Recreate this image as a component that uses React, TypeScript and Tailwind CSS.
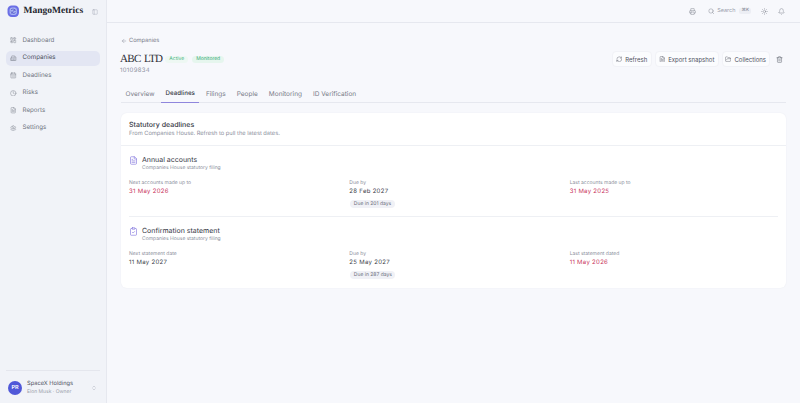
import React from 'react'
import {
  ArrowLeft,
  Bell,
  Building2,
  CalendarDays,
  ChevronsUpDown,
  ClipboardCheck,
  Clock,
  FileText,
  FolderOpen,
  LayoutDashboard,
  PanelLeft,
  Printer,
  RefreshCw,
  Search,
  Settings,
  Sun,
  Trash2,
} from 'lucide-react'

const navItems = [
  { label: 'Dashboard', icon: LayoutDashboard },
  { label: 'Companies', icon: Building2, active: true },
  { label: 'Deadlines', icon: CalendarDays },
  { label: 'Risks', icon: Clock },
  { label: 'Reports', icon: FileText },
  { label: 'Settings', icon: Settings },
]

const tabs = ['Overview', 'Deadlines', 'Filings', 'People', 'Monitoring', 'ID Verification']

function Field({ label, value, danger, badge }: { label: string; value: string; danger?: boolean; badge?: string }) {
  return (
    <div>
      <div className="text-[5px] leading-[8px] text-[#8b8f9c]">{label}</div>
      <div className={`text-[6px] leading-[10px] tracking-[0.3px] ${danger ? 'text-[#c8325a]' : 'text-[#3a3d48]'}`}>{value}</div>
      {badge && (
        <div className="mt-[3px] ml-[1px] w-fit rounded-[4px] bg-[#f0f1f6] px-[3.5px] text-[5px] leading-[8px] text-[#6b6f7c]">{badge}</div>
      )}
    </div>
  )
}

function Section({
  icon: Icon,
  title,
  fields,
}: {
  icon: React.ElementType
  title: string
  fields: { label: string; value: string; danger?: boolean; badge?: string }[]
}) {
  return (
    <div>
      <div className="flex items-start gap-[4px]">
        <Icon className="mt-[1px] h-[9px] w-[9px] text-[#7c6fdc]" strokeWidth={1.6} />
        <div>
          <div className="text-[7px] leading-[9px] text-[#33363f]">{title}</div>
          <div className="mt-[1px] text-[5px] leading-[7px] text-[#8b8f9c]">Companies House statutory filing</div>
        </div>
      </div>
      <div className="mt-[7px] grid grid-cols-3 gap-3">
        {fields.map((f) => (
          <Field key={f.label} {...f} />
        ))}
      </div>
    </div>
  )
}

export default function App() {
  return (
    <div className="flex h-[403px] w-[800px] overflow-hidden bg-[#f7f8fc] font-['Inter',sans-serif] [text-rendering:geometricPrecision]">
      {/* Sidebar */}
      <aside className="flex w-[107px] shrink-0 flex-col border-r border-[#e6e8ef] bg-[#f1f3f8] px-[6px]">
        <div className="flex h-[23px] items-center pl-[1px]">
          <svg viewBox="0 0 24 24" className="h-[12.5px] w-[12.5px]">
            <rect x="1" y="1" width="22" height="22" rx="8" fill="#6a6ee6" />
            <rect x="5" y="5" width="14" height="14" rx="5" fill="#a9b4f2" />
            <path d="M8 9c3-2.500 7-1 8 2M16 15c-3 2.500-7 1-8-2M8.500 16 15.500 8" fill="none" stroke="#4a4fc4" strokeWidth="1.5" strokeLinecap="round" />
          </svg>
          <span className="ml-[4px] font-['Liberation_Serif',serif] text-[9.5px] font-bold text-[#23252d]">MangoMetrics</span>
          <PanelLeft className="ml-auto mr-[2px] mt-[1px] h-[6px] w-[6px] text-[#9a9eab]" strokeWidth={1.5} />
        </div>
        <nav className="mt-[10px] flex flex-col gap-[2.5px]">
          {navItems.map(({ label, icon: Icon, active }) => (
            <div
              key={label}
              className={`flex h-[15px] items-center gap-[6px] rounded-[5px] pl-[4px] text-[6.2px] ${active ? 'bg-[#e3e6f3] text-[#4a4d5a]' : 'text-[#6f7380]'}`}
            >
              <Icon className="h-[6.5px] w-[6.5px] text-[#777b88]" strokeWidth={1.6} />
              {label}
            </div>
          ))}
        </nav>
        <div className="mt-auto mb-[7px] border-t border-[#e4e6ed] px-[2px] pt-[9px]">
          <div className="flex items-center">
            <div className="flex h-[14px] w-[14px] items-center justify-center rounded-full bg-[#5058d8] text-[5.5px] font-semibold text-white">PR</div>
            <div className="ml-[5px]">
              <div className="text-[5.7px] leading-[8px] text-[#4f525e]">SpaceX Holdings</div>
              <div className="mt-[1px] text-[5px] leading-[7px] text-[#9a9eab]">Elon Musk · Owner</div>
            </div>
            <ChevronsUpDown className="ml-auto mr-[1px] h-[6px] w-[6px] text-[#9a9eab]" strokeWidth={1.5} />
          </div>
        </div>
      </aside>

      <div className="flex min-w-0 flex-1 flex-col">
        {/* Top bar */}
        <header className="flex h-[23px] items-center justify-end border-b border-[#e6e8ef] pr-[15px]">
          <Printer className="h-[7px] w-[7px] text-[#777b88]" strokeWidth={1.5} />
          <div className="ml-[12px] flex items-center text-[5.5px] text-[#9a9eab]">
            <Search className="h-[6.5px] w-[6.5px] text-[#777b88]" strokeWidth={1.6} />
            <span className="ml-[3px]">Search</span>
            <span className="ml-[4px] rounded-[2px] bg-[#eceef4] px-[2px] text-[4.5px] leading-[6px] text-[#777b88]">⌘K</span>
          </div>
          <Sun className="ml-[10px] h-[7px] w-[7px] text-[#777b88]" strokeWidth={1.5} />
          <Bell className="ml-[10px] h-[7px] w-[7px] text-[#777b88]" strokeWidth={1.5} />
        </header>

        <main className="flex-1 px-[14px] pt-[14px]">
          <div className="flex items-center text-[5.7px] leading-[8px] text-[#777b88]">
            <ArrowLeft className="h-[6px] w-[6px]" strokeWidth={1.6} />
            <span className="ml-[2px]">Companies</span>
          </div>

          <div className="mt-[6px] flex items-start justify-between">
            <div>
              <div className="flex items-center">
                <h1 className="-ml-[1px] font-['Liberation_Serif',serif] text-[11px] leading-[16px] tracking-[-0.7px] text-[#2b2d35] [word-spacing:1.5px]">ABC LTD</h1>
                <span className="ml-[3px] rounded-[4px] bg-[#eef8f3] px-[4px] text-[5px] leading-[7px] text-[#46b583]">Active</span>
                <span className="ml-[4px] rounded-[4px] bg-[#e6f6ee] px-[4px] text-[5px] leading-[7px] text-[#3aab78]">Monitored</span>
              </div>
              <div className="-ml-[1px] text-[6px] leading-[8px] tracking-[0.3px] text-[#8b8f9c]">10109834</div>
            </div>
            <div className="flex items-center gap-[3px] pr-[3px] text-[6px] text-[#4f525e]">
              <button className="flex h-[16px] w-[40px] items-center justify-center gap-[3px] rounded-[4px] border border-[#f1f2f7] bg-white/50">
                <RefreshCw className="h-[6.5px] w-[6.5px]" strokeWidth={1.5} />
                Refresh
              </button>
              <button className="flex h-[16px] w-[64px] items-center justify-center gap-[3px] rounded-[4px] border border-[#f1f2f7] bg-white/50">
                <FileText className="h-[6.5px] w-[6.5px]" strokeWidth={1.5} />
                Export snapshot
              </button>
              <button className="flex h-[16px] w-[48px] items-center justify-center gap-[3px] rounded-[4px] border border-[#f1f2f7] bg-white/50">
                <FolderOpen className="h-[6.5px] w-[6.5px]" strokeWidth={1.5} />
                Collections
              </button>
              <Trash2 className="ml-[3.5px] h-[7px] w-[7px]" strokeWidth={1.5} />
            </div>
          </div>

          <div className="mt-[9.5px] flex h-[18px] gap-[2px] border-b border-[#e6e8ef] text-[6.5px] leading-[18px] text-[#777b88]">
            {tabs.map((t) => (
              <div
                key={t}
                className={`h-[18px] border-b px-[4.5px] ${t === 'Deadlines' ? 'border-[#8f86dd] text-[6.2px] font-medium text-[#3a3d48]' : 'border-transparent'}`}
              >
                {t}
              </div>
            ))}
          </div>

          <section className="mt-[10px] rounded-[6px] bg-white shadow-[0_0_2px_rgba(30,35,60,0.06)]">
            <div className="h-[33px] border-b border-[#eef0f4] px-[8px] pt-[7px]">
              <div className="text-[7px] font-medium leading-[9px] text-[#33363f]">Statutory deadlines</div>
              <div className="text-[5.7px] leading-[9px] text-[#8b8f9c]">From Companies House. Refresh to pull the latest dates.</div>
            </div>
            <div className="px-[8px] pb-[9px] pt-[9px]">
              <Section
                icon={FileText}
                title="Annual accounts"
                fields={[
                  { label: 'Next accounts made up to', value: '31 May 2026', danger: true },
                  { label: 'Due by', value: '28 Feb 2027', badge: 'Due in 201 days' },
                  { label: 'Last accounts made up to', value: '31 May 2025', danger: true },
                ]}
              />
              <div className="mb-[9px] mt-[8px] border-t border-[#eef0f4]" />
              <Section
                icon={ClipboardCheck}
                title="Confirmation statement"
                fields={[
                  { label: 'Next statement date', value: '11 May 2027' },
                  { label: 'Due by', value: '25 May 2027', badge: 'Due in 287 days' },
                  { label: 'Last statement dated', value: '11 May 2026', danger: true },
                ]}
              />
            </div>
          </section>
        </main>
      </div>
    </div>
  )
}
